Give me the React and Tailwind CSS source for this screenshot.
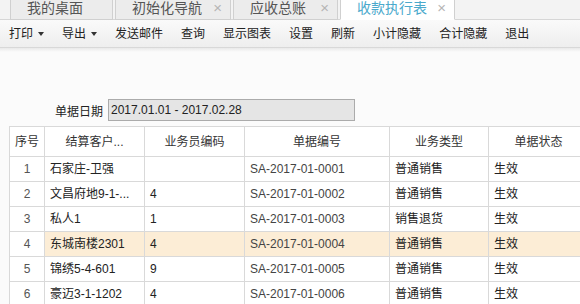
const tabs = [
  { label: "我的桌面", w: "w-[103px]", close: false },
  { label: "初始化导航", w: "w-[116px]", close: true },
  { label: "应收总账", w: "w-[105px]", close: true },
  { label: "收款执行表", w: "w-[115px]", close: true, active: true },
];

const tools = [
  { label: "打印", caret: true },
  { label: "导出", caret: true },
  { label: "发送邮件" },
  { label: "查询" },
  { label: "显示图表" },
  { label: "设置" },
  { label: "刷新" },
  { label: "小计隐藏" },
  { label: "合计隐藏" },
  { label: "退出" },
];

const rows = [
  ["1", "石家庄-卫强", "", "SA-2017-01-0001", "普通销售", "生效"],
  ["2", "文昌府地9-1-...", "4", "SA-2017-01-0002", "普通销售", "生效"],
  ["3", "私人1", "1", "SA-2017-01-0003", "销售退货", "生效"],
  ["4", "东城南楼2301", "4", "SA-2017-01-0004", "普通销售", "生效"],
  ["5", "锦绣5-4-601", "9", "SA-2017-01-0005", "普通销售", "生效"],
  ["6", "豪迈3-1-1202", "4", "SA-2017-01-0006", "普通销售", "生效"],
];

const headers = ["序号", "结算客户...", "业务员编码", "单据编号", "业务类型", "单据状态"];

const grid = "grid grid-cols-[35px_100px_100px_145px_99px_100px]";

export default function App() {
  return (
    <div className="w-[580px] h-[304px] overflow-hidden bg-[#fbfbfb] font-['Liberation_Sans','Noto_Sans_CJK_SC',sans-serif] text-[#222]">
      {/* tab strip */}
      <div className="h-[20px] bg-[#f3f3f3] flex items-end pl-[10px] gap-[2px] border-b border-[#d6d6d6]">
        {tabs.map((t) => (
          <div
            key={t.label}
            className={`${t.w} h-[21px] -mb-px flex items-center pl-[16px] border border-t-0 border-[#d0d0d0] text-[14px] leading-none ${
              t.active ? "bg-white text-[#4aa9cc] border-b-white" : "bg-[#ececec] text-[#555]"
            }`}
          >
            <span className="-mt-[3px]">{t.label}</span>
            {t.close && <span className="ml-auto mr-[8px] -mt-[3px] text-[15px] text-[#b5b5b5]">×</span>}
          </div>
        ))}
      </div>

      {/* toolbar */}
      <div className="h-[28px] bg-gradient-to-b from-[#fafafa] to-[#eeeeee] border-b border-[#d8d8d8] flex items-center pl-[9px] gap-[18px] text-[12px] text-[#222]">
        {tools.map((t) => (
          <div key={t.label} className="flex items-center">
            <span>{t.label}</span>
            {t.caret && (
              <span className="ml-[5px] w-0 h-0 border-l-[3px] border-r-[3px] border-t-[4px] border-l-transparent border-r-transparent border-t-[#333]" />
            )}
          </div>
        ))}
      </div>
      <div className="h-[4px] bg-gradient-to-b from-[#e9e9e9] to-[#fbfbfb]" />

      {/* filter */}
      <div className="h-[73px] flex items-end pb-[4px] pl-[55px]">
        <span className="text-[12px] text-[#222] mr-[5px]">单据日期</span>
        <div className="w-[247px] h-[22px] bg-[#e5e5e5] border border-[#ababab] flex items-center pl-[2px] text-[12px] text-[#222]">
          2017.01.01 - 2017.02.28
        </div>
      </div>

      {/* table */}
      <div className="pl-[9px] mt-[1px]">
        <div className="w-[600px] border-l border-t border-[#d9d9d9] bg-white text-[12px]">
          <div className={`${grid} h-[30px]`}>
            {headers.map((h) => (
              <div key={h} className="border-r border-b border-[#d9d9d9] flex items-center justify-center text-[#333]">
                {h}
              </div>
            ))}
          </div>
          {rows.map((r) => {
            const hl = r[0] === "4";
            return (
              <div key={r[0]} className={`${grid} h-[25px]`}>
                <div className="border-r border-b border-[#d9d9d9] flex items-center justify-center text-[#555] bg-white">
                  {r[0]}
                </div>
                {r.slice(1).map((c, i) => (
                  <div
                    key={i}
                    className={`border-r border-b border-[#d9d9d9] flex items-center pl-[5px] whitespace-nowrap overflow-hidden ${
                      hl ? "bg-[#fcedd6]" : "bg-white"
                    } ${i === 2 ? "text-[#444]" : "text-[#222]"}`}
                  >
                    {c}
                  </div>
                ))}
              </div>
            );
          })}
        </div>
      </div>
    </div>
  );
}
